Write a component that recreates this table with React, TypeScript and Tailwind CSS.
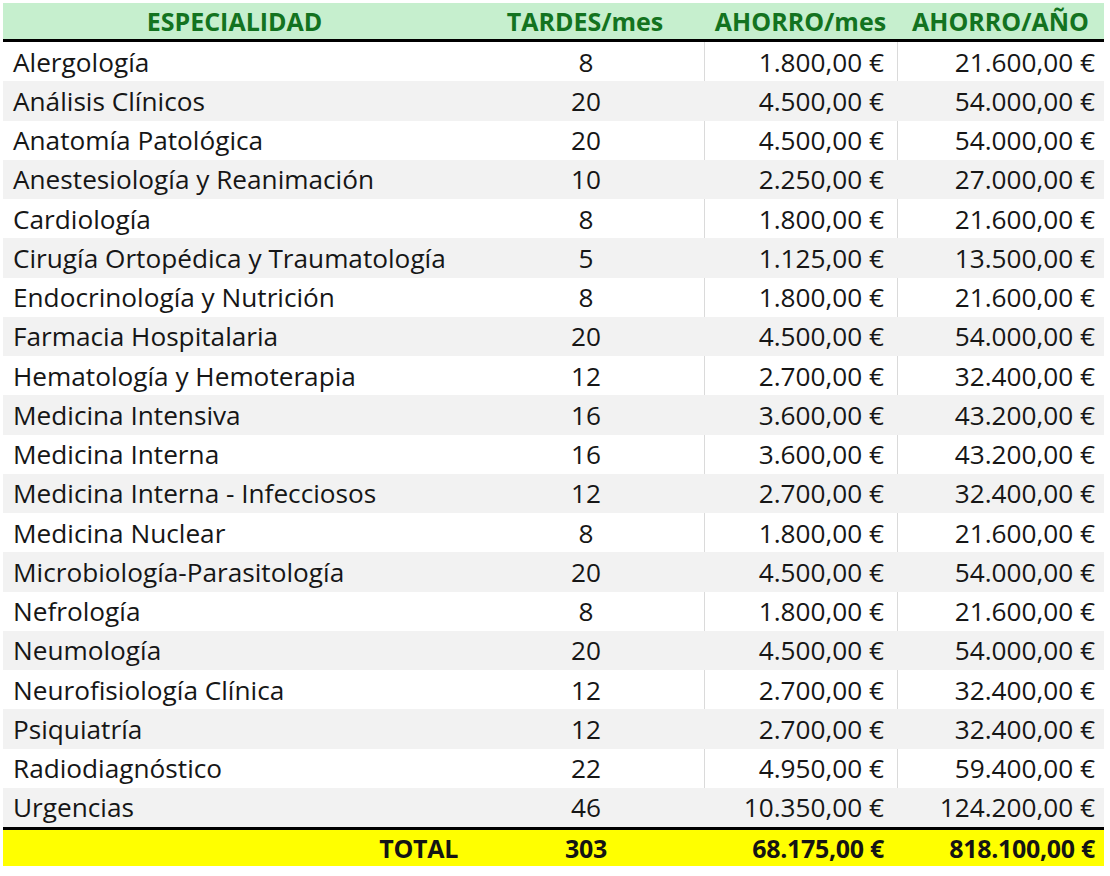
import React from "react";

const rows: [string, number, string, string][] = [
  ["Alergología", 8, "1.800,00 €", "21.600,00 €"],
  ["Análisis Clínicos", 20, "4.500,00 €", "54.000,00 €"],
  ["Anatomía Patológica", 20, "4.500,00 €", "54.000,00 €"],
  ["Anestesiología y Reanimación", 10, "2.250,00 €", "27.000,00 €"],
  ["Cardiología", 8, "1.800,00 €", "21.600,00 €"],
  ["Cirugía Ortopédica y Traumatología", 5, "1.125,00 €", "13.500,00 €"],
  ["Endocrinología y Nutrición", 8, "1.800,00 €", "21.600,00 €"],
  ["Farmacia Hospitalaria", 20, "4.500,00 €", "54.000,00 €"],
  ["Hematología y Hemoterapia", 12, "2.700,00 €", "32.400,00 €"],
  ["Medicina Intensiva", 16, "3.600,00 €", "43.200,00 €"],
  ["Medicina Interna", 16, "3.600,00 €", "43.200,00 €"],
  ["Medicina Interna - Infecciosos", 12, "2.700,00 €", "32.400,00 €"],
  ["Medicina Nuclear", 8, "1.800,00 €", "21.600,00 €"],
  ["Microbiología-Parasitología", 20, "4.500,00 €", "54.000,00 €"],
  ["Nefrología", 8, "1.800,00 €", "21.600,00 €"],
  ["Neumología", 20, "4.500,00 €", "54.000,00 €"],
  ["Neurofisiología Clínica", 12, "2.700,00 €", "32.400,00 €"],
  ["Psiquiatría", 12, "2.700,00 €", "32.400,00 €"],
  ["Radiodiagnóstico", 22, "4.950,00 €", "59.400,00 €"],
  ["Urgencias", 46, "10.350,00 €", "124.200,00 €"],
];

const cols = "grid grid-cols-[463px_238px_193px_207px]";

export default function App() {
  return (
    <div
      className="bg-white w-[1110px] h-[876px] pt-[3px] pl-[3px] text-[#161616] antialiased"
      style={{ fontFamily: '"Open Sans", "Noto Sans", sans-serif' }}
    >
      <div className="w-[1101px]">
        <div className={`${cols} h-[39px] bg-[#c6efce] border-b-[3px] border-black items-center font-bold text-[25px] text-[#137320] leading-none`}>
          <div className="text-center">ESPECIALIDAD</div>
          <div className="text-center">TARDES/mes</div>
          <div className="text-center">AHORRO/mes</div>
          <div className="text-center">AHORRO/AÑO</div>
        </div>
        {rows.map((r, i) => {
          const odd = i % 2 === 1;
          return (
            <div
              key={r[0]}
              className={`${cols} h-[39.25px] items-stretch text-[26.2px] leading-none ${odd ? "bg-[#f2f2f2]" : "bg-white"}`}
            >
              <div className="flex items-center pl-[10px] whitespace-nowrap">{r[0]}</div>
              <div className="flex items-center justify-center pl-[2px]">{r[1]}</div>
              <div className={`flex items-center justify-end pr-[13px] border-l ${odd ? "border-transparent" : "border-[#dadada]"}`}>{r[2]}</div>
              <div className={`flex items-center justify-end pr-[9px] border-l ${odd ? "border-transparent" : "border-[#dadada]"}`}>{r[3]}</div>
            </div>
          );
        })}
        <div className={`${cols} h-[39px] bg-[#ffff00] border-t-[3px] border-black items-center font-bold text-[25px] tracking-[-0.3px] text-[#141414] leading-none`}>
          <div className="text-right pr-[8px]">TOTAL</div>
          <div className="text-center pl-[2px]">303</div>
          <div className="text-right pr-[13px]">68.175,00 €</div>
          <div className="text-right pr-[9px]">818.100,00 €</div>
        </div>
      </div>
    </div>
  );
}
